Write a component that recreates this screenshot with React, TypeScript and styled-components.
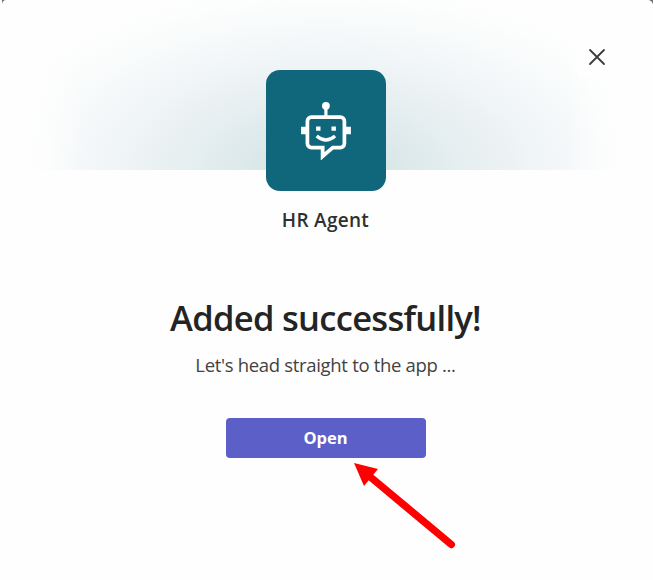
import React from "react";
import styled, { createGlobalStyle } from "styled-components";

const GlobalStyle = createGlobalStyle`
  * { box-sizing: border-box; }
  body { margin: 0; background: #fefefe; font-family: "Open Sans", "Noto Sans", sans-serif; }
`;

const Dialog = styled.main`
  position: relative;
  width: 653px;
  height: 580px;
  overflow: hidden;
  display: flex;
  flex-direction: column;
  align-items: center;
  padding-right: 2px;
  background: #fefefe;
`;

const Banner = styled.header`
  flex: none;
  width: 100%;
  height: 170px;
  display: flex;
  justify-content: center;
  padding-top: 70px;
  background:
    linear-gradient(90deg, #fefefe 25px, #fefefe00 85px, #fefefe00 565px, #fefefe 625px),
    radial-gradient(
      ellipse 350px 185px at 50% 100%,
      #d2e3e5 0%,
      #dbe8ea 20%,
      #e7eff1 42%,
      #f2f6f8 64%,
      #fafcfc 86%,
      #fefefe 100%
    );
`;

const AppTile = styled.div`
  flex: none;
  width: 120px;
  height: 120.5px;
  border-radius: 14px;
  background: #10677b;
`;

const CloseButton = styled.button`
  position: absolute;
  top: 37px;
  right: 36px;
  width: 40px;
  height: 40px;
  padding: 0;
  border: 0;
  border-radius: 4px;
  background: #fefefe;
`;

const Line = styled.p<{ $size: number; $weight: number; $height: number; $top: number; $color: string; $spacing: number }>`
  margin: ${(p) => p.$top}px 0 0;
  font-size: ${(p) => p.$size}px;
  font-weight: ${(p) => p.$weight};
  line-height: ${(p) => p.$height}px;
  letter-spacing: ${(p) => p.$spacing}px;
  color: ${(p) => p.$color};
  white-space: nowrap;
`;

const OpenButton = styled.button`
  flex: none;
  width: 200px;
  height: 40px;
  margin-top: 39px;
  padding: 0;
  border: 0;
  border-radius: 4px;
  background: #5b5fc7;
  color: #fff;
  font: 700 16.5px/40px "Open Sans", sans-serif;
`;

const Pointer = styled.svg`
  position: absolute;
  left: 350px;
  top: 458px;
`;

const Corner = styled.svg<{ $side: "left" | "right" }>`
  position: absolute;
  top: 0;
  ${(p) => p.$side}: 0;
  ${(p) => (p.$side === "right" ? "transform: scaleX(-1);" : "")}
`;

function RobotIcon() {
  return (
    <svg width="120" height="120" viewBox="0 0 120 120" fill="none" stroke="#fff" strokeWidth="3.7">
      <circle cx="59.9" cy="35.8" r="3.9" fill="#fff" stroke="none" />
      <path d="M59.9 38v8" strokeWidth="3.2" />
      <path d="M56.5 77.6H45.4a4 4 0 0 1-4-4V51.2a4 4 0 0 1 4-4h29a4 4 0 0 1 4 4v22.4a4 4 0 0 1-4 4h-7.6L56.7 86.2V75.8" />
      <path d="M54.9 77v13.1l4.5-4.2-2-4Z" fill="#fff" stroke="none" />
      <path d="M35.1 56.7h5v7.6h-5zM79.9 56.7h5v7.6h-5zM50.1 56.6h4.4v4.2h-4.4zM65.5 56.6h4.4v4.2h-4.4z" fill="#fff" stroke="none" />
      <path d="M50.7 66q9.2 8 18.4 0" strokeWidth="3.4" />
    </svg>
  );
}

export default function App() {
  return (
    <>
      <GlobalStyle />
      <Dialog>
        <Banner>
          <AppTile><RobotIcon /></AppTile>
        </Banner>
        <CloseButton aria-label="Close">
          <svg width="40" height="40" viewBox="0 0 40 40" fill="none" stroke="#3c3c3c" strokeWidth="1.8" strokeLinecap="round">
            <path d="m13 13 14 14M27 13 13 27" />
          </svg>
        </CloseButton>
        <Line $size={19} $weight={600} $height={28} $top={36} $color="#303030" $spacing={0.3}>HR Agent</Line>
        <Line as="h1" $size={34.5} $weight={600} $height={48} $top={60} $color="#242424" $spacing={-0.7}>Added successfully!</Line>
        <Line $size={18.5} $weight={400} $height={28} $top={9} $color="#424242" $spacing={-0.32}>Let's head straight to the app ...</Line>
        <OpenButton>Open</OpenButton>
        <Pointer width="112" height="96" viewBox="350 458 112 96" aria-hidden="true">
          <path d="M371 477.5 451.3 544.5" stroke="#f00" strokeWidth="7.4" strokeLinecap="round" />
          <path d="m354 463 24 6-14 17Z" fill="#f00" />
        </Pointer>
        <Corner $side="left" width="5" height="4" viewBox="0 0 5 4">
          <path d="M2 0h3Q2.3 1 2 4Z" fill="#77706f" />
        </Corner>
        <Corner $side="right" width="5" height="4" viewBox="0 0 5 4">
          <path d="M0 0h4Q1 1 0 4Z" fill="#77706f" />
        </Corner>
      </Dialog>
    </>
  );
}
